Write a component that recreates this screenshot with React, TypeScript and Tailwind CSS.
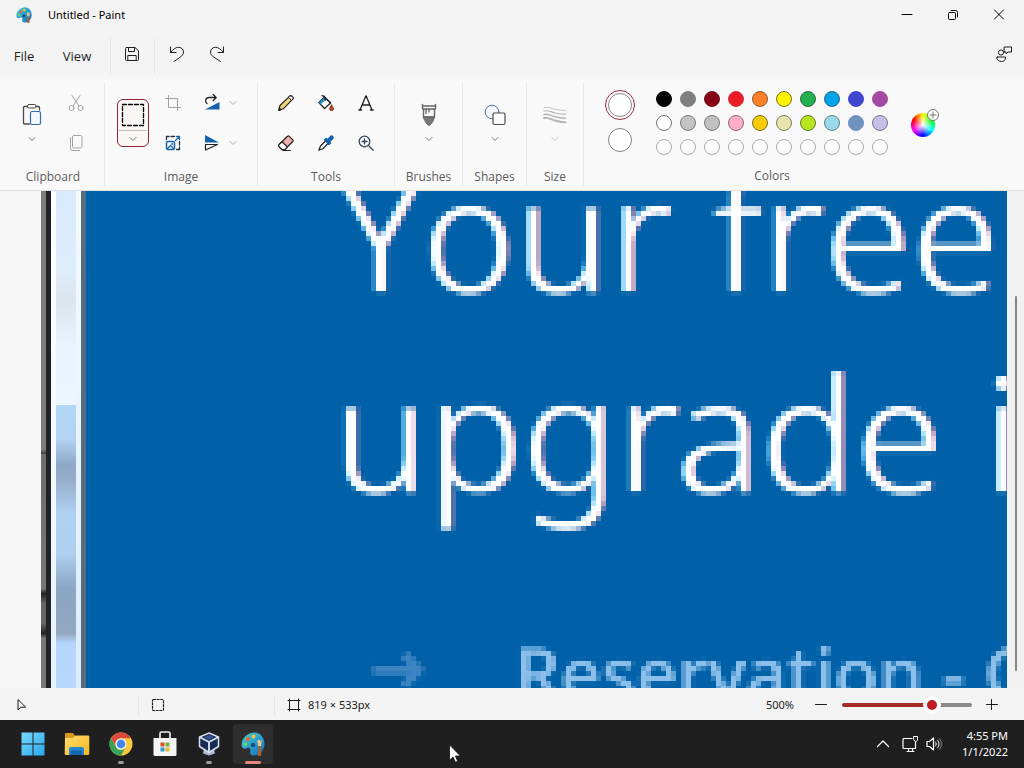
import React from 'react';
import clsx from 'clsx';

const swatches = [
  'bg-black border-black',
  'bg-[#7f7f7f] border-[#7f7f7f]',
  'bg-[#880015] border-[#6f0f20]',
  'bg-[#ed1c24] border-[#d8323a]',
  'bg-[#ff7f27] border-[#8f5a35]',
  'bg-[#fff200] border-[#77731f]',
  'bg-[#22b14c] border-[#33683f]',
  'bg-[#00a2e8] border-[#2b6885]',
  'bg-[#3f48cc] border-[#3f48cc]',
  'bg-[#a349a4] border-[#a349a4]',
  'bg-white border-[#777]',
  'bg-[#c3c3c3] border-[#777]',
  'bg-[#c0c0c0] border-[#777]',
  'bg-[#ffaec9] border-[#8a6a75]',
  'bg-[#f7cb0a] border-[#806c1c]',
  'bg-[#e9e3ae] border-[#7c7a66]',
  'bg-[#b5e61d] border-[#64782a]',
  'bg-[#99d9ea] border-[#5f7e87]',
  'bg-[#7092be] border-[#7092be]',
  'bg-[#c8bfe7] border-[#77728a]',
];

type IconProps = {
  size?: number;
  className?: string;
  children: React.ReactNode;
};

const Icon: React.FC<IconProps> = ({ size = 16, className, children }) => (
  <svg
    width={size}
    height={size}
    viewBox={`0 0 ${size} ${size}`}
    fill="none"
    stroke="currentColor"
    strokeLinecap="round"
    strokeLinejoin="round"
    aria-hidden="true"
    className={clsx('shrink-0', className)}
  >
    {children}
  </svg>
);

const Chevron: React.FC<{ className?: string }> = ({ className }) => (
  <Icon size={8} className={clsx('text-[#777]', className)}>
    <path d="M1 2.5 4 5.5 7 2.5" />
  </Icon>
);

const ToolButton: React.FC<{ label: string; className?: string; children: React.ReactNode }> = ({
  label,
  className,
  children,
}) => (
  <button aria-label={label} className={clsx('flex h-10 w-10 items-center justify-center', className)}>
    {children}
  </button>
);

const Group: React.FC<{ title: string; className: string; children: React.ReactNode }> = ({
  title,
  className,
  children,
}) => (
  <section className={clsx('flex shrink-0 flex-col pt-px', className)}>
    <div className="flex h-20 items-center justify-center">{children}</div>
    <h2 className="mt-1 text-center text-xs leading-5 text-[#5c5c5c]">{title}</h2>
  </section>
);

// Large drop-down tool: the icon above and the chevron below
const BigTool: React.FC<{ label: string; chevron?: string; children: React.ReactNode }> = ({
  label,
  chevron,
  children,
}) => (
  <button aria-label={label} className="flex h-20 w-11 flex-col items-center gap-2 pt-5">
    {children}
    <Chevron className={chevron} />
  </button>
);

const PaletteIcon: React.FC<{ size: number }> = ({ size }) => (
  <svg width={size} height={size} viewBox="0 0 24 24" aria-hidden="true">
    <defs>
      <linearGradient id={`pal${size}`} x1="0" y1="0" x2="1" y2="1">
        <stop offset="0" stopColor="#55cfc0" />
        <stop offset="0.5" stopColor="#2a9fd0" />
        <stop offset="1" stopColor="#1869b8" />
      </linearGradient>
    </defs>
    <path
      d="M14 .5C7 .3 1 6 .6 12.2c-.2 3 1.4 5 3.600 4.600 2-.4 2.800-1.600 4.300-.8 1.600.9.5 2.600.6 4.400.2 2.200 2.400 3.300 5 2.900 5.500-.8 9.400-5.600 9.400-11.300C23.500 5.700 19.500.8 14 .5Z"
      fill={`url(#pal${size})`}
    />
    <circle cx="12.5" cy="4.500" r="2" fill="#f5c443" />
    <circle cx="7" cy="7.300" r="2" fill="#df6b43" />
    <circle cx="4.600" cy="12.200" r="1.700" fill="#73d95a" />
    <circle cx="12" cy="13" r="2.300" fill="#1b4e7c" />
    <path d="M17.200 14h2.600l.5 8.500a1.700 1.700 0 0 1-3.500 0Z" fill="#a0632e" />
    <path d="M16.300 8.500 17 14h3l1-6-1.500 1-1-1.300Z" fill="#e6c48f" />
  </svg>
);

const TitleBar = () => (
  <header className="flex h-8 shrink-0 items-center pb-0.5 pl-4">
    <PaletteIcon size={16} />
    <h1 className="ml-4 flex-1 font-['Noto_Sans'] text-[11px] text-black">Untitled - Paint</h1>
    <div className="mr-0.5 flex text-black">
      <button aria-label="Minimize" className="flex h-7 w-[46px] items-center justify-center">
        <Icon size={12}>
          <path d="M1 5.500h10" />
        </Icon>
      </button>
      <button aria-label="Restore" className="flex h-7 w-[46px] items-center justify-center">
        <Icon size={12}>
          <rect x="1.500" y="3.500" width="7" height="7" rx="1" />
          <path d="M4 1.500h4.500a2 2 0 0 1 2 2V8" />
        </Icon>
      </button>
      <button aria-label="Close" className="flex h-7 w-[46px] items-center justify-center">
        <Icon size={12}>
          <path d="m1.500 1 9 9m0-9-9 9" />
        </Icon>
      </button>
    </div>
  </header>
);

const MenuBar = () => (
  <nav className="flex h-12 shrink-0 items-center bg-linear-to-b from-[#f3f3f3] from-80% to-[#f6f6f6] text-[13px] text-[#1f1f1f]">
    <button className="w-12 pt-0.5">File</button>
    <button className="ml-1 w-[50px] pt-0.5">View</button>
    <div className="ml-2 h-9 w-px bg-[#e6e6e6]" />
    <button aria-label="Save" className="flex w-[43px] justify-center pr-0.5 pb-1">
      <Icon>
        <path d="M2.500 1.500h8.500l3.500 3.200v8.800a1 1 0 0 1-1 1h-11a1 1 0 0 1-1-1v-11a1 1 0 0 1 1-1Z" />
        <path d="M4.500 1.500v4h6v-4M3.800 14.500v-5h8.400v5" />
      </Icon>
    </button>
    <div className="h-9 w-px bg-[#e6e6e6]" />
    <button aria-label="Undo" className="ml-0.5 flex w-10 justify-center pb-1">
      <Icon>
        <path d="M1.500 1v5.500H7M1.800 6.200C4 3.500 6.500 1.300 9.500 1.300c2.800 0 5 2 5 4.700 0 1.700-.8 3-2 4.200L5 15.500" />
      </Icon>
    </button>
    <button aria-label="Redo" className="flex w-10 justify-center pb-1">
      <Icon>
        <path d="M14.500 1v5.500H9M14.200 6.200C12 3.500 9.500 1.300 6.500 1.300c-2.800 0-5 2-5 4.700 0 1.700.8 3 2 4.200L11.500 15.500" />
      </Icon>
    </button>
    <button aria-label="Feedback" className="mr-3 ml-auto pb-1">
      <Icon>
        <circle cx="5" cy="6.500" r="2.600" />
        <path d="M1.500 11h8c.3 3-1.500 4.500-4 4.500S.7 14 .7 11.500c0-.4.3-.5.8-.5Z" />
        <path d="M8.500 1h7v5H12l-2 1.700V6H8.500Z" />
      </Icon>
    </button>
  </nav>
);

const Ribbon = () => (
  <div className="flex h-[111px] shrink-0 divide-x divide-[#e9e9e9] border-b border-[#e2e2e2] bg-[#f9f9f9] pt-0.5 pb-1">
    <Group title="Clipboard" className="w-[105px] pl-0.5">
      <BigTool label="Paste">
        <Icon size={24} className="text-[#4a4a4a]">
          <path d="M7.500 3.500h-3a1 1 0 0 0-1 1v15.500a1 1 0 0 0 1 1h5M16 3.500h2.500a1 1 0 0 1 1 1V7" strokeWidth="1.300" />
          <rect x="7.500" y="1.500" width="8.500" height="3.500" rx="1.500" />
          <rect x="10.500" y="8.500" width="10" height="13" rx="1.500" fill="#f3f8fd" stroke="#2b71b3" strokeWidth="1.200" />
        </Icon>
      </BigTool>
      <div className="ml-0.5 text-[#a3a3a3]">
        <ToolButton label="Cut">
          <Icon>
            <path d="M4 .5 10.700 10.700M12 .5 5.300 10.700" />
            <circle cx="3.500" cy="13" r="2.500" />
            <circle cx="12.500" cy="13" r="2.500" />
          </Icon>
        </ToolButton>
        <ToolButton label="Copy">
          <Icon>
            <rect x="4.500" y=".5" width="9.500" height="12.500" rx="1.500" />
            <path d="M2.500 2.500v11a2 2 0 0 0 2 2h7" />
          </Icon>
        </ToolButton>
      </div>
    </Group>

    <Group title="Image" className="w-[153px]">
      <button
        aria-label="Select"
        className="flex h-12 w-8 flex-col items-center rounded-md border border-[#8e2434] bg-[#f9f6f6] pt-[3px]"
      >
        <Icon size={24} className="text-black">
          <rect x="1.500" y="1.500" width="21" height="21" strokeDasharray="4 2" strokeWidth="1.300" />
        </Icon>
        <span className="mt-[3px] h-px w-7 bg-[#bdbdbd]" />
        <Chevron className="mt-1" />
      </button>
      <div className="ml-1">
        <ToolButton label="Crop" className="text-[#a0a0a0]">
          <Icon>
            <path d="M3.500.5v12h12M.5 3.500h12v12" />
          </Icon>
        </ToolButton>
        <ToolButton label="Resize">
          <Icon className="text-[#1565a8]">
            <path d="M1.500 4.500v-3H4M6 1.500h3.500M14.500 6.500V10M14.500 12v2.500H11.500" stroke="#1f2f40" strokeWidth="1.300" />
            <path d="m10.500 5.500 4-4M11.500 1.500h3v3" strokeWidth="1.300" />
            <rect x="1.500" y="6.500" width="8" height="8" rx="1.500" strokeWidth="1.500" />
            <path d="m2.500 13.500 3-3 3 3" strokeWidth="1.300" />
            <circle cx="7" cy="9" r=".5" />
          </Icon>
        </ToolButton>
      </div>
      <div className="pr-2">
        <button aria-label="Rotate" className="flex h-10 items-center gap-1 pl-2">
          <Icon size={24}>
            <path d="M4 18.500 18.500 11v7.500Z" fill="#1263ad" stroke="none" />
            <path d="M6 12.500C3.500 10.500 4.500 6.500 8 6.500h7M12.200 3.500l3 3-3 3" stroke="#222" strokeWidth="1.300" />
          </Icon>
          <Chevron className="text-[#aaa]" />
        </button>
        <button aria-label="Flip" className="flex h-10 items-center gap-1 pl-2">
          <Icon size={24}>
            <path d="M4 4v7.500h14Z" fill="#1263ad" stroke="none" />
            <path d="M4.500 13.500h12l-12 5.500Z" stroke="#222" strokeWidth="1.200" />
          </Icon>
          <Chevron className="text-[#aaa]" />
        </button>
      </div>
    </Group>

    <Group title="Tools" className="w-[137px]">
      <div className="grid grid-cols-3 text-[#222]">
        <ToolButton label="Pencil">
          <Icon>
            <path d="M.8 15.200 2 10.500 12 .9c1.500-.8 3.700 1.300 3 3L5.300 13.800Z" fill="#f2d675" strokeWidth="1.200" />
            <path d="m10.500 2.500 3 3 1.500-1.600c.7-1.700-1.500-3.800-3-3Z" fill="#e6e6e6" />
            <path d="m.8 15.200.6-2.400 1.600 1.800Z" fill="#222" />
          </Icon>
        </ToolButton>
        <ToolButton label="Fill">
          <Icon>
            <path d="M6.500 2 12.500 8 6.500 13.500.8 7.500Z" fill="#fff" strokeWidth="1.200" />
            <path d="m4 4.500 3-3L9 4 2.500 9.500l-1.700-2Z" fill="#2b8bc9" stroke="none" />
            <path d="M4 .5 6.500 2l6 6M6 .8 7.500 5" strokeWidth="1.200" />
            <path d="M13.500 10c1.400 2 2 2.800 2 3.800a1.900 1.900 0 0 1-3.800 0c0-1 .6-1.800 1.800-3.800Z" fill="#b7472a" stroke="#8c3a24" />
          </Icon>
        </ToolButton>
        <ToolButton label="Text">
          <Icon>
            <path d="M2 15 7.800 1h.4L14 15M4 10h8M.8 15h2.700M12.500 15h2.700" strokeWidth="1.300" />
          </Icon>
        </ToolButton>
        <ToolButton label="Eraser">
          <Icon>
            <path d="M9.500 1.300c.6-.6 1.200-.6 1.800 0l3.500 3.500c.5.600.5 1.100 0 1.700L6.500 14.700H4L.9 11.500c-.5-.6-.5-1.100 0-1.700Z" fill="#f1b2ae" strokeWidth="1.200" />
            <path d="M4 6.800 9.500 12l-2.800 2.700H4L.9 11.500c-.5-.6-.5-1.100 0-1.700Z" fill="#fff" strokeWidth="1.200" />
            <path d="M5 15.500h7.500" />
          </Icon>
        </ToolButton>
        <ToolButton label="Color picker">
          <Icon>
            <path d="M8 5.500 2.500 11 .8 15.200 5 13.500 10.500 8Z" fill="#fff" strokeWidth="1.200" />
            <path d="m6.500 4.500 1.600-1.300 1.700 1L12 1.500c2.300-2 4.300.8 2.800 2.500L12 6.500l.7 1.700-1.500 1.500Z" fill="#1263ad" stroke="#1263ad" />
          </Icon>
        </ToolButton>
        <ToolButton label="Magnifier" className="text-[#34485c]">
          <Icon>
            <circle cx="6.500" cy="6.500" r="5.300" strokeWidth="1.300" />
            <path d="m10.500 10.500 4.700 4.700M4 6.500h5M6.500 4v5" strokeWidth="1.300" />
          </Icon>
        </ToolButton>
      </div>
    </Group>

    <Group title="Brushes" className="w-[68px]">
      <BigTool label="Brushes">
        <Icon size={24} className="text-[#666]">
          <path d="M6.500 14h11l-1.500 4c-1 2.500-2.500 3.500-4 4.500-1.500-1-3-2-4-4.500Z" fill="#777" />
          <path d="M5.500 1.500V6h13V1.500M5.500 3h13M6.500 6v8h11V6M9 6v4.500M12 6v3" strokeWidth="1.400" />
        </Icon>
      </BigTool>
    </Group>

    <Group title="Shapes" className="w-16">
      <BigTool label="Shapes">
        <Icon size={24} className="text-[#4d4d4d]">
          <circle cx="9" cy="9" r="6.800" fill="#f0f6fb" stroke="#55718c" />
          <rect x="10" y="10" width="12" height="11.500" rx="1.500" fill="#fafafa" strokeWidth="1.200" />
        </Icon>
      </BigTool>
    </Group>

    <Group title="Size" className="w-[57px]">
      <BigTool label="Size" chevron="opacity-40">
        <Icon size={24} className="text-[#b5b5b5]">
          <path d="M1 4.500c4-1.200 7 1 11 1.800s7 1.200 10.500 1" strokeWidth=".8" />
          <path d="M1 8c4-1.200 7 1 11 2s7 1.300 10.500 1.200" strokeWidth="1.200" />
          <path d="M1 11.500c4-1 7 1.200 11 2.300s7 1.400 10.500 1.400" strokeWidth="1.500" />
          <path d="M1 15c4-1 7 1.300 11 2.500s7 1.800 10.500 1.800" strokeWidth="1.900" />
        </Icon>
      </BigTool>
    </Group>

    <Group title="Colors" className="w-[376px]">
      <div className="flex flex-col items-center gap-2 pb-1">
        <button aria-label="Color 1" className="rounded-full border border-[#9c2f3f] p-0.5">
          <span className="block size-6 rounded-full border border-[#888] bg-white" />
        </button>
        <button aria-label="Color 2" className="size-6 rounded-full border border-[#808080] bg-white" />
      </div>
      <div className="ml-[21px] grid grid-cols-10 gap-2">
        {swatches.map((color, i) => (
          <button key={i} aria-label={`Swatch ${i + 1}`} className={clsx('size-4 rounded-full border', color)} />
        ))}
        {Array.from({ length: 10 }, (_, i) => (
          <button
            key={i}
            aria-label={`Custom color ${i + 1}`}
            className="size-4 rounded-full border border-[#a8a8a8] bg-[#fcfcfc]"
          />
        ))}
      </div>
      <button aria-label="Edit colors" className="relative ml-[23px] size-7">
        <span className="absolute bottom-0 left-0 size-6 rounded-full bg-[radial-gradient(circle,white,transparent_60%),conic-gradient(from_-60deg,red,yellow,lime,cyan,blue,magenta,red)]" />
        <span className="absolute top-0 right-0 size-3 rounded-full border border-[#777] bg-white/90">
          <Icon size={10} className="text-[#777]">
            <path d="M5 2v6M2 5h6" />
          </Icon>
        </span>
      </button>
    </Group>
  </div>
);

const Canvas = () => (
  <main className="relative flex min-h-0 flex-1 bg-[#f7f7f7] pl-[41px]">
    {/* the image is shown at 500%, so its pixels are five wide */}
    <svg className="absolute size-0" aria-hidden="true">
      <filter id="pixelate" x="0" y="0" width="1" height="1" colorInterpolationFilters="sRGB">
        <feGaussianBlur in="SourceGraphic" stdDeviation="1" result="soft" />
        <feFlood x="2" y="2" width="1" height="1" />
        <feComposite width="5" height="5" />
        <feTile result="grid" />
        <feComposite in="soft" in2="grid" operator="in" />
        <feMorphology operator="dilate" radius="2" />
      </filter>
    </svg>
    <div className="w-[5px] bg-[linear-gradient(#7b7c7c_52%,#333_53%,#6d6d69_53%,#777_80%,#222_81%,#666_83%,#666_87%,#222_89%,#777_90%)]" />
    <div className="w-[5px] bg-[#1f2327]" />
    <div className="w-[5px] bg-linear-to-b from-white via-[#f6faff] to-[#e6f2ff]" />
    <div className="w-5 bg-[linear-gradient(#d9eafc,#deedfc_16%,#dbe5ed_22%,#e8f2fd_30%,#edf5fe_43%,#b2d6f5_43%,#b2d3f1_50%,#8ea8c8_55%,#95adc9_58%,#b0d2f2_65%,#aed0ee_73%,#8ba5c4_80%,#93a8c0_89%,#b4d6fa_91%,#b8d8fc)]" />
    <div className="w-[5px] bg-linear-to-b from-[#f6faff] to-[#dcecfc]" />
    <div className="w-[5px] bg-[#566c80]" />
    <div className="min-w-0 flex-1 overflow-hidden bg-[#0060a8]">
      <div className="-mt-[60px] font-['Noto_Sans'] whitespace-nowrap text-white [filter:url(#pixelate)]">
        <p className="pl-[252px] text-[158px] leading-[200px] font-light [font-kerning:none] [text-shadow:-2px_0_#6fd2ff,2px_0_#c58ab0]">
          Your free
        </p>
        <p className="pl-[248px] text-[158px] leading-[200px] font-light [text-shadow:-2px_0_#6fd2ff,2px_0_#c58ab0]">
          upgrade is
        </p>
        <div className="flex items-center pt-[91px] pl-[284px] text-[#8cc0ea]">
          <Icon size={60} className="text-[#3c83c1]">
            <path d="M3 28h44M34 12l15 16-15 16" strokeWidth="9" strokeLinecap="butt" strokeLinejoin="miter" />
          </Icon>
          <p className="ml-[84px] text-[72px] leading-[100px] font-medium [text-shadow:1px_0_#8cc0ea]">Reservation - C</p>
        </div>
      </div>
    </div>
    <div className="flex w-[17px] justify-center bg-[#f0f0f0] pt-[105px] pb-[17px]">
      <div className="w-0.5 rounded-full bg-[#858585]" />
    </div>
  </main>
);

const StatusBar = () => (
  <footer className="flex h-8 shrink-0 items-center bg-[#f3f3f3] pt-0.5 pl-4 font-['Noto_Sans'] text-[11px] text-[#1b1b1b]">
    <div className="flex w-[122px]">
      <Icon size={12}>
        <path d="M2 1v10l2.800-2.800h4.500Z" />
      </Icon>
    </div>
    <div className="h-5 w-px bg-[#e4e4e4]" />
    <div className="flex w-[135px] pl-3">
      <Icon size={14}>
        <rect x="1.500" y="1.500" width="11" height="11" rx="1" strokeDasharray="2 1.600" strokeWidth="1.200" />
      </Icon>
    </div>
    <div className="h-5 w-px bg-[#e4e4e4]" />
    <div className="flex items-center gap-[7px] pl-3">
      <Icon size={14}>
        <path d="M2.500 1v12M11.500 1v12M1 2.500h12M1 11.500h12" />
      </Icon>
      <span>819 × 533px</span>
    </div>
    <label htmlFor="zoom" className="ml-auto">
      500%
    </label>
    <button aria-label="Zoom out" className="ml-[21px]">
      <Icon size={12}>
        <path d="M.5 5.500h11" />
      </Icon>
    </button>
    <input
      id="zoom"
      type="range"
      min="0"
      max="100"
      defaultValue="72"
      className="ml-[15px] h-1 w-[130px] appearance-none rounded-full bg-[linear-gradient(to_right,#a62b25_70%,#8a8a8a_70%)] [&::-webkit-slider-thumb]:size-[18px] [&::-webkit-slider-thumb]:appearance-none [&::-webkit-slider-thumb]:rounded-full [&::-webkit-slider-thumb]:border-4 [&::-webkit-slider-thumb]:border-white [&::-webkit-slider-thumb]:bg-[#c21a22]"
    />
    <button aria-label="Zoom in" className="mr-[26px] ml-3.5">
      <Icon size={12}>
        <path d="M.5 5.500h11M5.500.5v10" />
      </Icon>
    </button>
  </footer>
);

const TaskButton: React.FC<{ label: string; active?: boolean; running?: boolean; children: React.ReactNode }> = ({
  label,
  active,
  running,
  children,
}) => (
  <button
    aria-label={label}
    className={clsx('relative flex size-10 items-center justify-center rounded', active && 'bg-[#2e2e2e]')}
  >
    {children}
    {running && <span className="absolute bottom-0 h-[3px] w-1.5 rounded-full bg-[#9a9a9a]" />}
    {active && <span className="absolute bottom-0 h-[3px] w-4 rounded-full bg-[#e8837c]" />}
  </button>
);

const Taskbar = () => (
  <div className="relative flex h-12 shrink-0 items-center gap-1 bg-[#1f1f1f] pl-[13px] text-white">
    <TaskButton label="Start">
      <svg width="24" height="24" viewBox="0 0 24 24" aria-hidden="true">
        <defs>
          <linearGradient id="win" x1="0" y1="0" x2="1" y2="1">
            <stop offset="0" stopColor="#78d9fb" />
            <stop offset="1" stopColor="#29a8ee" />
          </linearGradient>
        </defs>
        <path d="M.5.5h11v11H.5ZM12.500.5h11v11h-11ZM.5 12.500h11v11H.5ZM12.500 12.500h11v11h-11Z" fill="url(#win)" />
      </svg>
    </TaskButton>
    <TaskButton label="File Explorer">
      <svg width="26" height="24" viewBox="0 0 26 24" aria-hidden="true">
        <defs>
          <linearGradient id="folder" x1="0" y1="0" x2="1" y2="1">
            <stop offset="0" stopColor="#ffdc6b" />
            <stop offset="1" stopColor="#f5b826" />
          </linearGradient>
        </defs>
        <path d="M1 2a1 1 0 0 1 1-1h7l2 2.500v4H1Z" fill="#d69a1c" />
        <path d="M1 6h8l2.500-2.500H24a1.300 1.300 0 0 1 1.300 1.300V22A1.300 1.300 0 0 1 24 23H2a1.300 1.300 0 0 1-1.300-1.300Z" fill="url(#folder)" />
        <path d="M5 23v-6a2 2 0 0 1 2-2h11a2 2 0 0 1 2 2v6Z" fill="#2187cf" />
        <path d="M8 18.500h9a1 1 0 0 1 1 1V23H7v-3.500a1 1 0 0 1 1-1Z" fill="#1566a7" />
      </svg>
    </TaskButton>
    <TaskButton label="Chrome" running>
      <svg width="24" height="24" viewBox="0 0 24 24" aria-hidden="true">
        <circle cx="12" cy="12" r="11.500" fill="#fbc93b" />
        <path d="M2 6.250A11.500 11.500 0 0 1 22 6.250H12A5.750 5.750 0 0 0 7 14.900Z" fill="#dd4a3d" />
        <path d="M2 6.250 7 14.900A5.750 5.750 0 0 0 17 14.900L12 23.500A11.500 11.500 0 0 1 2 6.250Z" fill="#35a25a" />
        <circle cx="12" cy="12" r="5.500" fill="#fff" />
        <circle cx="12" cy="12" r="4.400" fill="#4585ee" />
      </svg>
    </TaskButton>
    <TaskButton label="Store">
      <svg width="24" height="26" viewBox="0 0 24 26" aria-hidden="true">
        <path d="M7 8V2.500A1.500 1.500 0 0 1 8.500 1h7A1.500 1.500 0 0 1 17 2.500V8" fill="none" stroke="#eee" strokeWidth="1.700" />
        <path d="M.5 7h23v16.500a1.500 1.500 0 0 1-1.500 1.500H2A1.500 1.500 0 0 1 .5 23.500Z" fill="#f4f4f4" />
        <path d="M7.500 11.500h4v4h-4Z" fill="#d9512c" />
        <path d="M12.500 11.500h4v4h-4Z" fill="#7fb02b" />
        <path d="M7.500 16.500h4v4h-4Z" fill="#2a9bd8" />
        <path d="M12.500 16.500h4v4h-4Z" fill="#efb52a" />
      </svg>
    </TaskButton>
    <TaskButton label="VirtualBox" running>
      <svg width="22" height="24" viewBox="0 0 22 24" aria-hidden="true">
        <path d="M6 17h10l1 4.500-6 2-6-2Z" fill="#a9b8d2" />
        <path d="M11 1 20.500 5v9.500L11 20.500 1.500 14.500V5Z" fill="#172c55" stroke="#d7dfee" strokeWidth="1.500" />
        <path d="M1.500 5 11 10l9.500-5M11 10v10.500" fill="none" stroke="#d7dfee" strokeWidth="1.900" />
        <path d="m11 3 5 2.200L11 7.700 6 5.200Z" fill="#38558f" />
      </svg>
    </TaskButton>
    <TaskButton label="Paint" active>
      <PaletteIcon size={24} />
    </TaskButton>

    <div className="mr-4 ml-auto flex items-center">
      <button aria-label="Show hidden icons" className="mr-3">
        <Icon size={14}>
          <path d="m1.500 9.500 5.500-5.500 5.500 5.500" strokeWidth="1.200" />
        </Icon>
      </button>
      <button aria-label="Network and volume" className="mr-5 flex gap-2">
        <Icon>
          <path d="M10 2.500H2a1 1 0 0 0-1 1v8a1 1 0 0 0 1 1h11.500V6M5 15.500h7M6.500 12.500v3M10.500 12.500v3" strokeWidth="1.200" />
          <path d="M12 .5h3.500V4L13.700 6 12 4Z" />
        </Icon>
        <Icon>
          <path d="M1 5.500h2.500L7.500 2v12l-4-3.500H1Z" strokeWidth="1.200" />
          <path d="M9.500 6c1 1.200 1 2.800 0 4M11.500 4.200c2 2.200 2 5.400 0 7.600" />
          <path d="M13.500 2.500c2.700 3.300 2.700 7.700 0 11" stroke="#888" />
        </Icon>
      </button>
      <div className="text-right font-['Noto_Sans'] text-[11px] leading-4">
        <div>4:55 PM</div>
        <div>1/1/2022</div>
      </div>
    </div>

    {/* mouse pointer */}
    <svg width="12" height="19" viewBox="0 0 12 19" className="absolute top-6 left-[449px]" aria-hidden="true">
      <path d="M.5.8v15.500l3.600-3.400 2.300 5.300 2.300-1-2.300-5.200h5Z" fill="#fff" stroke="#111" strokeWidth=".8" />
    </svg>
  </div>
);

const App: React.FC = () => {
  return (
    <div className="flex h-screen flex-col overflow-hidden bg-[#f3f3f3] font-['Open_Sans','Noto_Sans',sans-serif]">
      <TitleBar />
      <MenuBar />
      <Ribbon />
      <Canvas />
      <StatusBar />
      <Taskbar />
    </div>
  );
};

export default App;
